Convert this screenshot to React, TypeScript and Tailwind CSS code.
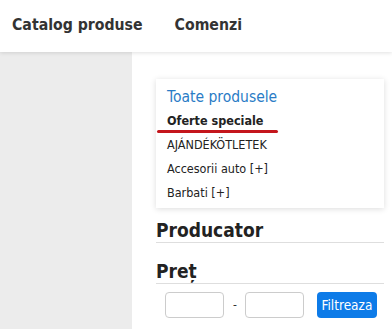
import React from "react";

const font = {
  fontFamily: '"DejaVu Sans Condensed", "DejaVu Sans", sans-serif',
};

export default function App() {
  return (
    <div
      className="w-[392px] h-[329px] overflow-hidden bg-white flex flex-col [font-stretch:condensed]"
      style={font}
    >
      <header className="h-[52px] shrink-0 bg-white relative z-10 shadow-[0_1px_4px_rgba(0,0,0,0.12)] flex items-center pl-[12px] gap-[32px] text-[15.7px] font-bold text-[#333] pb-[3px]">
        <span>Catalog produse</span>
        <span>Comenzi</span>
      </header>
      <div className="flex flex-1">
        <aside className="w-[132px] shrink-0 bg-[#ececec]" />
        <main className="flex-1 bg-white pl-[24px] pr-[8px] pt-[27px]">
          <div className="bg-white shadow-[0_1px_6px_rgba(0,0,0,0.14)] pl-[11px] pt-[6px] pb-[3px]">
            <div className="leading-[24px] text-[15.5px] text-[#2a7cc6]">Toate produsele</div>
            <div className="relative leading-[24px] text-[12.5px] font-bold text-[#222]">
              Oferte speciale
              <span className="absolute left-[-10px] top-[21px] w-[121px] h-[2.5px] rounded-full bg-[#c4161c]" />
            </div>
            <div className="leading-[24px] text-[12.5px] text-[#222]">AJÁNDÉKÖTLETEK</div>
            <div className="leading-[24px] text-[12.5px] text-[#222]">Accesorii auto [+]</div>
            <div className="leading-[24px] text-[12.5px] text-[#222]">Barbati [+]</div>
          </div>
          <div className="mt-[11px] leading-[23px] text-[19px] font-bold text-[#222] border-b border-[#dedede]">
            Producator
          </div>
          <div className="mt-[17px] leading-[23px] text-[19px] font-bold text-[#222] border-b border-[#dedede]">
            Preț
          </div>
          <div className="mt-[8px] pl-[9px] flex items-center">
            <div className="w-[59px] h-[26px] border border-[#cccccc] rounded-[4px]" />
            <span className="ml-[9px] mr-[8px] text-[12px] text-[#333]">-</span>
            <div className="w-[59px] h-[26px] border border-[#cccccc] rounded-[4px]" />
            <button className="ml-[13px] w-[60px] h-[26px] rounded-[4px] bg-[#0d7be8] text-white text-[13.5px] leading-[26px]">
              Filtreaza
            </button>
          </div>
        </main>
      </div>
    </div>
  );
}
